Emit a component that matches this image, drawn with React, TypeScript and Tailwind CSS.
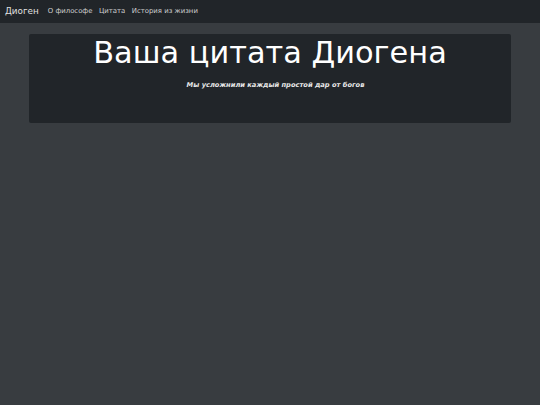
export default function App() {
  return (
    <div className="min-h-[405px] w-full bg-[#383c40]" style={{ fontFamily: '"DejaVu Sans", sans-serif' }}>
      <nav className="flex h-[23px] items-center bg-[#212529] px-[5px]">
        <span className="mr-[9px] text-[8.8px] text-[#e0e0e0]">Диоген</span>
        <div className="flex gap-[6.5px] text-[6.9px] text-[#d0d0d0]">
          <span>О философе</span>
          <span>Цитата</span>
          <span>История из жизни</span>
        </div>
      </nav>
      <div className="px-[29px] pt-[11px]">
        <div className="flex h-[89px] flex-col items-center rounded-[2px] bg-[#212529]">
          <h1 className="mt-[1px] text-[30.4px] leading-[36px] text-white">Ваша цитата Диогена</h1>
          <p className="mt-[9px] pl-[11px] text-[6.7px] font-bold italic text-[#e8e8e8]">Мы усложнили каждый простой дар от богов</p>
        </div>
      </div>
    </div>
  );
}
